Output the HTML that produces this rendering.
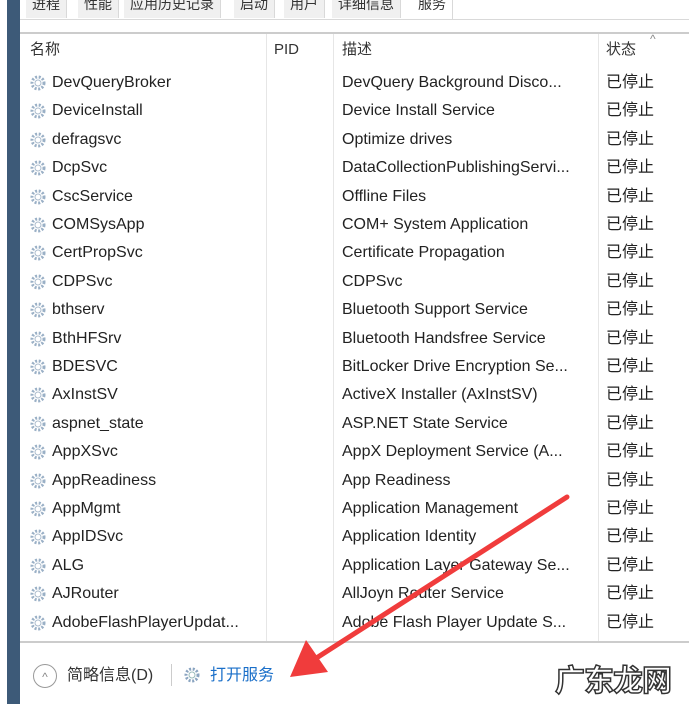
<!DOCTYPE html><html><head><meta charset="utf-8"><style>
body{margin:0;width:689px;height:704px;background:#fff;position:relative;overflow:hidden;font-family:"Liberation Sans","Noto Sans CJK SC",sans-serif;}
.bar{position:absolute;left:7px;top:0;width:13px;height:704px;background:#3d5a78;}
.tabs{position:absolute;left:20px;top:0;height:19px;width:669px;border-bottom:1px solid #d9d9d9;}
.tab{position:absolute;top:-6px;height:24px;background:#f0f0f0;border-right:1px solid #d9d9d9;font-size:14px;color:#333;line-height:20px;padding:0 6px;}
.hl{position:absolute;left:20px;right:0;top:32px;border-top:2px solid #ccc;}
.vl{position:absolute;top:34px;height:607px;border-left:1px solid #e6e6e6;}
.t{position:absolute;font-size:16px;line-height:20px;height:20px;color:#222;white-space:nowrap;}
.h{position:absolute;font-size:15px;line-height:20px;color:#333;top:40px;}
.gear{position:absolute;left:30px;width:16px;height:16px;}
</style></head><body>
<div class="bar"></div>
<div class="tabs">
<div class="tab" style="left:6px">进程</div><div class="tab" style="left:58px">性能</div><div class="tab" style="left:104px">应用历史记录</div><div class="tab" style="left:214px">启动</div><div class="tab" style="left:264px">用户</div><div class="tab" style="left:312px">详细信息</div><div class="tab" style="left:392px;background:#fff;height:25px">服务</div>
</div>
<div class="hl"></div>
<div class="vl" style="left:266px"></div><div class="vl" style="left:333px"></div><div class="vl" style="left:598px"></div>
<div class="h" style="left:30px">名称</div><div class="h" style="left:274px">PID</div><div class="h" style="left:342px">描述</div><div class="h" style="left:606px">状态</div>
<div style="position:absolute;left:650px;top:32px;font-size:12px;color:#888">^</div>
<div id="rows"></div>
<div style="position:absolute;left:20px;right:0;top:641px;border-top:2px solid #ccc"></div>
<div style="position:absolute;left:33px;top:664px;width:22px;height:22px;border:1px solid #999;border-radius:50%;text-align:center;font-size:12px;color:#888;line-height:24px">^</div>
<div class="t" style="left:67px;top:666px;color:#333">简略信息(D)</div>
<div style="position:absolute;left:171px;top:664px;height:22px;border-left:1px solid #ccc"></div>
<svg class="gear" style="left:184px;top:667px" viewBox="0 0 16 16"><circle cx="8" cy="8" r="6" fill="none" stroke="#8aa4c0" stroke-width="3" stroke-dasharray="2 1.6"/><circle cx="8" cy="8" r="3" fill="#fff" stroke="#9bb" /></svg>
<div class="t" style="left:210px;top:666px;color:#1a6fc9">打开服务</div>
<svg style="position:absolute;left:0;top:0" width="689" height="704"><line x1="567" y1="497" x2="318" y2="657" stroke="#f03c3c" stroke-width="5" stroke-linecap="round"/><polygon points="290,677 306,640 328,672" fill="#f03c3c"/></svg>
<div style="position:absolute;left:555px;top:656px;font-size:30px;color:#fff;-webkit-text-stroke:1.5px #333;font-weight:bold;letter-spacing:-1px">广东龙网</div>
<script>
var d=[["DevQueryBroker","DevQuery Background Disco..."],["DeviceInstall","Device Install Service"],["defragsvc","Optimize drives"],["DcpSvc","DataCollectionPublishingServi..."],["CscService","Offline Files"],["COMSysApp","COM+ System Application"],["CertPropSvc","Certificate Propagation"],["CDPSvc","CDPSvc"],["bthserv","Bluetooth Support Service"],["BthHFSrv","Bluetooth Handsfree Service"],["BDESVC","BitLocker Drive Encryption Se..."],["AxInstSV","ActiveX Installer (AxInstSV)"],["aspnet_state","ASP.NET State Service"],["AppXSvc","AppX Deployment Service (A..."],["AppReadiness","App Readiness"],["AppMgmt","Application Management"],["AppIDSvc","Application Identity"],["ALG","Application Layer Gateway Se..."],["AJRouter","AllJoyn Router Service"],["AdobeFlashPlayerUpdat...","Adobe Flash Player Update S..."]];
var h="";d.forEach(function(r,i){var y=Math.round(73+i*28.4);h+='<svg class="gear" style="top:'+(y+2)+'px" viewBox="0 0 16 16"><circle cx="8" cy="8" r="6" fill="none" stroke="#9ab0c6" stroke-width="3" stroke-dasharray="2 1.6"/><circle cx="8" cy="8" r="3" fill="#fff" stroke="#abc"/></svg><div class="t" style="left:52px;top:'+y+'px">'+r[0]+'</div><div class="t" style="left:342px;top:'+y+'px">'+r[1]+'</div><div class="t" style="left:606px;top:'+y+'px">已停止</div>';});
document.getElementById("rows").innerHTML=h;
</script>
</body></html>
